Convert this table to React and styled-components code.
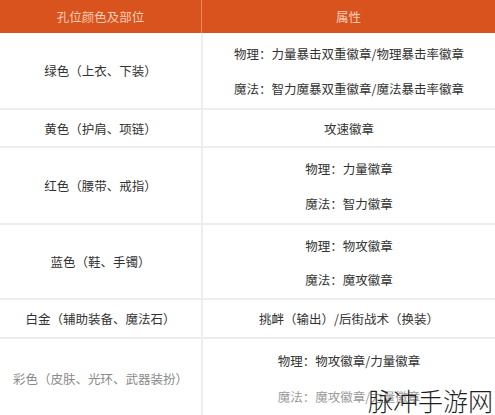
import React from "react";
import styled, { createGlobalStyle } from "styled-components";

const GlobalStyle = createGlobalStyle`
  html, body {
    margin: 0;
    padding: 0;
    background: #ffffff;
  }
  body {
    font-family: "Noto Sans CJK SC", "Noto Sans", sans-serif;
    overflow: hidden;
  }
`;

const Page = styled.div`
  position: relative;
  width: 495px;
  height: 415px;
  overflow: hidden;
  background: #fff;
`;

const Table = styled.div`
  display: grid;
  grid-template-columns: 201px 294px;
`;

const HeadCell = styled.div`
  height: 33px;
  display: flex;
  align-items: center;
  justify-content: center;
  background: #d8531d;
  color: #f6cdb8;
  font-size: 12.5px;
  border-left: ${(p) => (p.$divider ? "1px solid #ee8a5e" : "none")};
`;

const Cell = styled.div`
  height: ${(p) => p.$h}px;
  box-sizing: border-box;
  border-bottom: 2px solid #ededed;
  border-left: ${(p) => (p.$divider ? "2px solid #ededed" : "none")};
  display: flex;
  flex-direction: column;
  align-items: center;
  justify-content: ${(p) => (p.$split ? "space-around" : "center")};
  padding: ${(p) => (p.$split ? "3px 0 2px" : "0")};
  font-size: 12.5px;
  color: ${(p) => (p.$faded ? "#8a8a8a" : "#333")};
`;

const Line = styled.span`
  color: ${(p) => (p.$faded ? "#9a9a9a" : "#333")};
  white-space: nowrap;
`;

const Watermark = styled.div`
  position: absolute;
  right: 2px;
  bottom: 1px;
  line-height: 28px;
  font-family: "Noto Sans CJK SC", sans-serif;
  font-weight: 300;
  font-size: 25px;
  color: #1f1f1f;
`;

const rows = [
  {
    h: 77,
    part: "绿色（上衣、下装）",
    attrs: ["物理：力量暴击双重徽章/物理暴击率徽章", "魔法：智力魔暴双重徽章/魔法暴击率徽章"],
  },
  { h: 38, part: "黄色（护肩、项链）", attrs: ["攻速徽章"] },
  { h: 77, part: "红色（腰带、戒指）", attrs: ["物理：力量徽章", "魔法：智力徽章"] },
  { h: 75, part: "蓝色（鞋、手镯）", attrs: ["物理：物攻徽章", "魔法：魔攻徽章"] },
  { h: 39, part: "白金（辅助装备、魔法石）", attrs: ["挑衅（输出）/后街战术（换装）"] },
  {
    h: 80,
    part: "彩色（皮肤、光环、武器装扮）",
    faded: true,
    attrs: ["物理：物攻徽章/力量徽章", "魔法：魔攻徽章/力量徽章"],
    fadedLast: true,
  },
];

export default function App() {
  return (
    <Page>
      <GlobalStyle />
      <Table>
        <HeadCell>孔位颜色及部位</HeadCell>
        <HeadCell $divider>属性</HeadCell>
        {rows.map((r) => (
          <React.Fragment key={r.part}>
            <Cell $h={r.h} $faded={r.faded}>
              {r.part}
            </Cell>
            <Cell $h={r.h} $divider $split={r.attrs.length > 1}>
              {r.attrs.map((a, i) => (
                <Line key={a} $faded={r.fadedLast && i === r.attrs.length - 1}>
                  {a}
                </Line>
              ))}
            </Cell>
          </React.Fragment>
        ))}
      </Table>
      <Watermark>脉冲手游网</Watermark>
    </Page>
  );
}
